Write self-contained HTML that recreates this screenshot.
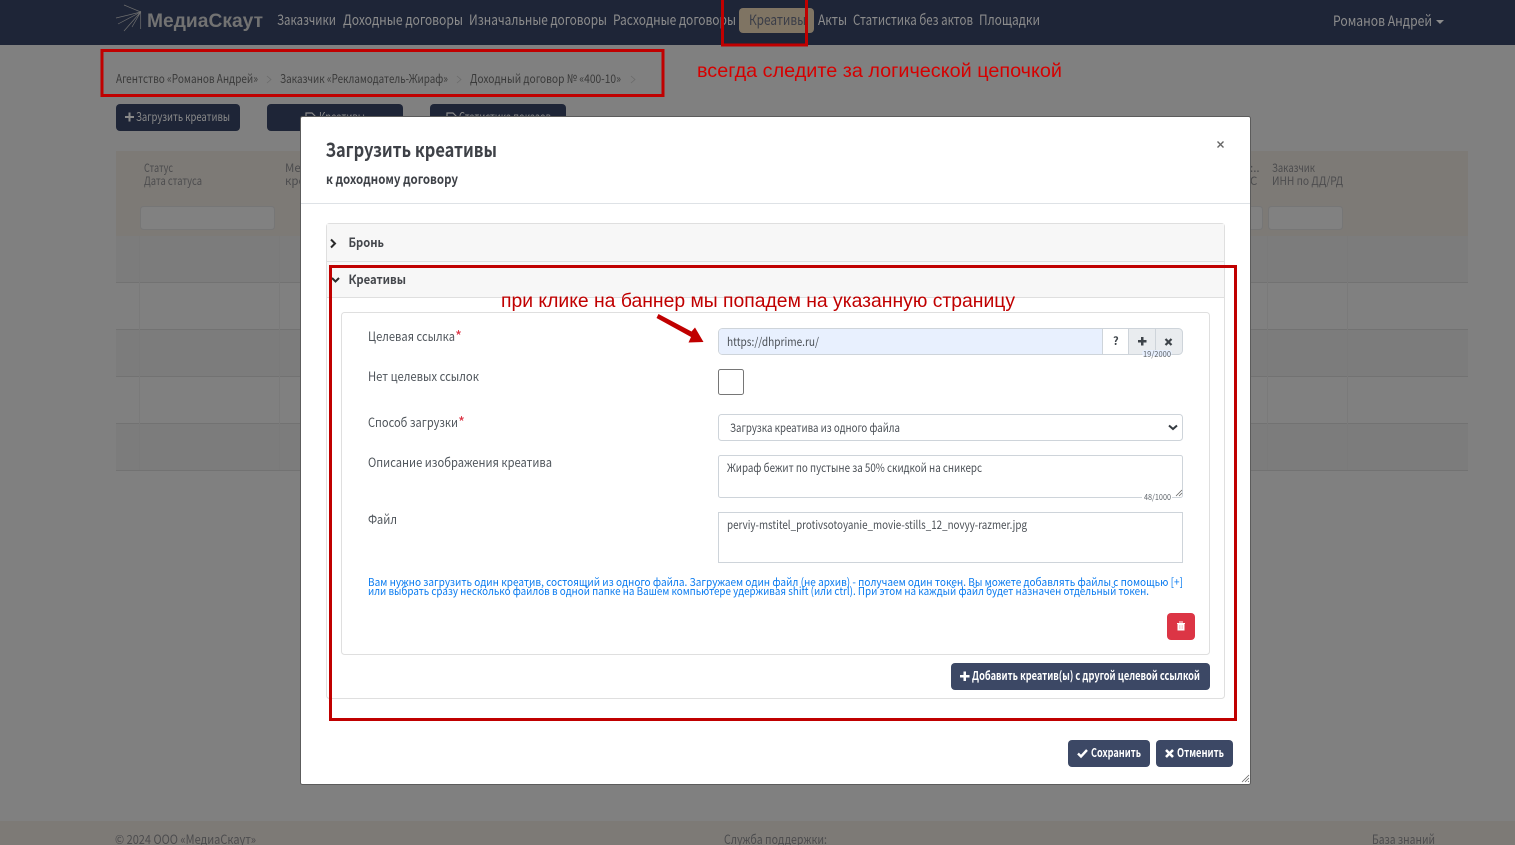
<!DOCTYPE html>
<html lang="ru"><head><meta charset="utf-8"><title>Загрузить креативы</title>
<style>
html,body{margin:0;padding:0;width:1515px;height:845px;overflow:hidden;background:#808080}
svg{display:block}
text{font-family:"Noto Sans CJK SC","Liberation Sans",sans-serif;white-space:pre}
.a{font-family:"Liberation Sans",sans-serif;font-size:19.5px}
.n{font-size:14.5px;fill:#8c8c8c}
.b{font-size:12px;fill:#3a3a3a}
.h{font-size:11.5px;fill:#4c4c4e}
.l{font-size:12.5px;fill:#50565c}
.f{font-size:11.5px;fill:#4a4f55}
.t{font-size:11px;fill:#0a7bf0}
.c{font-size:8px;fill:#60666c}
.w{font-size:12px;fill:#fff;font-weight:700}
.g{font-size:12px;fill:#8a8a8a}
</style></head><body>
<svg width="1515" height="845" viewBox="0 0 1515 845" xmlns="http://www.w3.org/2000/svg">
<rect width="1515" height="845" fill="#808080"/>
<!-- header -->
<rect width="1515" height="45" fill="#1e2537"/>
<g stroke="#6f6f6f" stroke-width=".7" fill="none"><path d="M140.700 11V29M140.700 12L124 5M140.700 12L116 18M140.700 12L118 24M140.700 12L124 31M140.700 12L132 27"/></g>
<text x="147" y="27" textLength="116" lengthAdjust="spacingAndGlyphs" style="font-family:'Liberation Sans',sans-serif;font-size:19px;font-weight:700;fill:#727272">МедиаСкаут</text>
<text class="n" x="277" y="25" textLength="59" lengthAdjust="spacingAndGlyphs">Заказчики</text>
<text class="n" x="343" y="25" textLength="120" lengthAdjust="spacingAndGlyphs">Доходные договоры</text>
<text class="n" x="469" y="25" textLength="138" lengthAdjust="spacingAndGlyphs">Изначальные договоры</text>
<text class="n" x="613" y="25" textLength="123" lengthAdjust="spacingAndGlyphs">Расходные договоры</text>
<rect x="739" y="8" width="75" height="25" rx="4" fill="#7f7463"/>
<text class="n" x="749" y="25" textLength="57" lengthAdjust="spacingAndGlyphs" style="fill:#3a3d48">Креативы</text>
<text class="n" x="818" y="25" textLength="29" lengthAdjust="spacingAndGlyphs">Акты</text>
<text class="n" x="853" y="25" textLength="120" lengthAdjust="spacingAndGlyphs">Статистика без актов</text>
<text class="n" x="979" y="25" textLength="61" lengthAdjust="spacingAndGlyphs">Площадки</text>
<text class="n" x="1333" y="26" textLength="99" lengthAdjust="spacingAndGlyphs">Романов Андрей</text>
<path d="M1436 20h8l-4 4z" fill="#8c8c8c"/>
<!-- breadcrumbs -->
<text class="b" x="116" y="83" textLength="142" lengthAdjust="spacingAndGlyphs">Агентство «Романов Андрей»</text>
<text class="b" x="280" y="83" textLength="168" lengthAdjust="spacingAndGlyphs">Заказчик «Рекламодатель-Жираф»</text>
<text class="b" x="470" y="83" textLength="151" lengthAdjust="spacingAndGlyphs">Доходный договор № «400-10»</text>
<g fill="none" stroke="#6a6a6a" stroke-width=".8"><path d="M267 76l4 3.500-4 3.500M457 76l4 3.500-4 3.500M631 76l4 3.500-4 3.500"/></g>
<!-- page buttons -->
<rect x="116" y="104" width="124" height="27" rx="4" fill="#1e2537"/>
<rect x="267" y="104" width="136" height="27" rx="4" fill="#1e2537"/>
<rect x="430" y="104" width="136" height="27" rx="4" fill="#1e2537"/>
<path d="M125 116h3.500v-3.500h2v3.500h3.500v2h-3.500v3.500h-2v-3.500h-3.500z" fill="#8a8a8a"/>
<text class="g" x="136" y="121" textLength="94" lengthAdjust="spacingAndGlyphs">Загрузить креативы</text>
<text class="g" x="319" y="121" textLength="46" lengthAdjust="spacingAndGlyphs">Креативы</text>
<text class="g" x="459" y="121" textLength="92" lengthAdjust="spacingAndGlyphs">Статистика показов</text>
<path d="M306 113h6l3 3v5h-9zM447 113h6l3 3v5h-9z" fill="none" stroke="#8a8a8a" stroke-width="1.200"/>
<!-- table -->
<rect x="116" y="151" width="1352" height="85" fill="#7d7a76"/>
<rect x="116" y="236" width="1352" height="47" fill="#7c7c7c"/>
<rect x="116" y="330" width="1352" height="47" fill="#7c7c7c"/>
<rect x="116" y="424" width="1352" height="47" fill="#7c7c7c"/>
<g fill="#727272"><rect x="116" y="282" width="1352" height="1"/><rect x="116" y="329" width="1352" height="1"/><rect x="116" y="376" width="1352" height="1"/><rect x="116" y="423" width="1352" height="1"/><rect x="116" y="470" width="1352" height="1"/></g>
<g fill="#7a7a7a"><rect x="139" y="236" width="1" height="234"/><rect x="279" y="236" width="1" height="234"/><rect x="1267" y="236" width="1" height="234"/><rect x="1347" y="236" width="1" height="234"/></g>
<text class="h" x="144" y="172" textLength="29" lengthAdjust="spacingAndGlyphs">Статус</text>
<text class="h" x="144" y="185" textLength="58" lengthAdjust="spacingAndGlyphs">Дата статуса</text>
<text class="h" x="285" y="172">Медиа</text>
<text class="h" x="285" y="185">креатив</text>
<text class="h" x="1250" y="172">:..</text>
<text class="h" x="1250" y="185">С</text>
<text class="h" x="1272" y="172" textLength="43" lengthAdjust="spacingAndGlyphs">Заказчик</text>
<text class="h" x="1272" y="185" textLength="71" lengthAdjust="spacingAndGlyphs">ИНН по ДД/РД</text>
<rect x="140.500" y="206.500" width="134" height="23" rx="3" fill="#818181" stroke="#767676"/>
<rect x="1230.500" y="206.500" width="32" height="23" rx="3" fill="#818181" stroke="#767676"/>
<rect x="1268.500" y="206.500" width="74" height="23" rx="3" fill="#818181" stroke="#767676"/>
<!-- footer -->
<rect y="821" width="1515" height="24" fill="#7d7a76"/>
<text class="h" x="115" y="844" textLength="141" lengthAdjust="spacingAndGlyphs" style="font-size:12.5px">© 2024 ООО «МедиаСкаут»</text>
<text class="h" x="724" y="844" textLength="103" lengthAdjust="spacingAndGlyphs" style="font-size:12.5px">Служба поддержки:</text>
<text class="h" x="1372" y="844" textLength="63" lengthAdjust="spacingAndGlyphs" style="font-size:12.5px">База знаний</text>
<!-- modal -->
<rect x="300.500" y="116.500" width="950" height="668" rx="2" fill="#fff" stroke="#5c5c5c"/>
<text x="325.500" y="157" textLength="171.500" lengthAdjust="spacingAndGlyphs" style="font-size:19.5px;font-weight:700;fill:#3e4147">Загрузить креативы</text>
<text x="326" y="184" textLength="132" lengthAdjust="spacingAndGlyphs" style="font-size:13.5px;font-weight:700;fill:#3e4147">к доходному договору</text>
<path d="M1217.500 141.500l6 6M1223.500 141.500l-6 6" stroke="#666" stroke-width="1.400"/>
<rect x="301" y="203" width="949" height="1" fill="#dee2e6"/>
<!-- accordion -->
<rect x="326.500" y="223.500" width="898" height="475" rx="3" fill="#fff" stroke="#dfdfdf"/>
<rect x="327" y="224" width="897" height="37" fill="#f7f7f7"/>
<rect x="327" y="261" width="897" height="1" fill="#dfdfdf"/>
<rect x="327" y="262" width="897" height="35" fill="#f7f7f7"/>
<rect x="327" y="297" width="897" height="1" fill="#dfdfdf"/>
<path d="M331 239.500l4 4-4 4" fill="none" stroke="#2b2b2b" stroke-width="2"/>
<path d="M332 278l3.500 3.500 3.500-3.500" fill="none" stroke="#2b2b2b" stroke-width="2"/>
<text x="348.500" y="247" textLength="35.500" lengthAdjust="spacingAndGlyphs" style="font-size:12.5px;font-weight:700;fill:#44474c">Бронь</text>
<text x="348.500" y="284" textLength="57.500" lengthAdjust="spacingAndGlyphs" style="font-size:12.5px;font-weight:700;fill:#44474c">Креативы</text>
<!-- card -->
<rect x="341.500" y="312.500" width="868" height="342" rx="3" fill="#fff" stroke="#dfdfdf"/>
<text class="l" x="368" y="341" textLength="87" lengthAdjust="spacingAndGlyphs">Целевая ссылка</text><text x="455" y="342" style="font-size:15px;fill:#dc3545">*</text>
<text class="l" x="368" y="381" textLength="111" lengthAdjust="spacingAndGlyphs">Нет целевых ссылок</text>
<text class="l" x="368" y="427" textLength="90" lengthAdjust="spacingAndGlyphs">Способ загрузки</text><text x="458" y="428" style="font-size:15px;fill:#dc3545">*</text>
<text class="l" x="368" y="467" textLength="184" lengthAdjust="spacingAndGlyphs">Описание изображения креатива</text>
<text class="l" x="368" y="524" textLength="29" lengthAdjust="spacingAndGlyphs">Файл</text>
<!-- url group -->
<rect x="718.500" y="328.500" width="464" height="26" rx="4" fill="#e9ecef" stroke="#ced4da"/>
<path d="M722 329H1102V354H722a3 3 0 0 1-3-3V332a3 3 0 0 1 3-3z" fill="#e8f0fe"/>
<rect x="1102" y="329" width="27" height="25" fill="#fff"/>
<path d="M1102.500 329V354M1128.500 329V354M1155.500 329V354" stroke="#ced4da"/>
<text class="f" x="727" y="346" textLength="92" lengthAdjust="spacingAndGlyphs">https://dhprime.ru/</text>
<text x="1113" y="345" style="font-size:11px;font-weight:700;fill:#3e444a">?</text>
<path d="M1138 340h3v-3h2.500v3h3v2.500h-3v3h-2.500v-3h-3z" fill="#3e444a"/>
<path d="M1165.500 339l6 6M1171.500 339l-6 6" stroke="#3e444a" stroke-width="2.200"/>
<rect x="1142" y="350" width="30" height="6" rx="3" fill="#e8f0fe"/>
<text class="c" x="1143" y="357" textLength="28" lengthAdjust="spacingAndGlyphs">19/2000</text>
<!-- checkbox -->
<rect x="718.500" y="369.500" width="25" height="25" rx="2" fill="#fff" stroke="#767676"/>
<!-- select -->
<rect x="718.500" y="414.500" width="464" height="26" rx="3" fill="#fff" stroke="#ced4da"/>
<text class="f" x="730" y="432" textLength="170" lengthAdjust="spacingAndGlyphs">Загрузка креатива из одного файла</text>
<path d="M1169 425.500l4 3.500 4-3.500" fill="none" stroke="#343a40" stroke-width="2"/>
<!-- textarea -->
<rect x="718.500" y="455.500" width="464" height="42" rx="2" fill="#fff" stroke="#ced4da"/>
<text class="f" x="727" y="472" textLength="255" lengthAdjust="spacingAndGlyphs">Жираф бежит по пустыне за 50% скидкой на сникерс</text>
<rect x="1142" y="494" width="30" height="7" fill="#fff"/>
<text class="c" x="1144" y="500" textLength="27" lengthAdjust="spacingAndGlyphs">48/1000</text>
<path d="M1176 496l6-6M1179 496l3-3" stroke="#666" stroke-width=".8"/>
<!-- file -->
<rect x="718.500" y="512.500" width="464" height="50" fill="#fff" stroke="#ced4da"/>
<text class="f" x="727" y="529" textLength="300" lengthAdjust="spacingAndGlyphs">perviy-mstitel_protivsotoyanie_movie-stills_12_novyy-razmer.jpg</text>
<!-- help -->
<text class="t" x="368" y="586" textLength="815" lengthAdjust="spacingAndGlyphs">Вам нужно загрузить один креатив, состоящий из одного файла. Загружаем один файл (не архив) - получаем один токен. Вы можете добавлять файлы с помощью [+]</text>
<text class="t" x="368" y="595" textLength="781" lengthAdjust="spacingAndGlyphs">или выбрать сразу несколько файлов в одной папке на Вашем компьютере удерживая shift (или ctrl). При этом на каждый файл будет назначен отдельный токен.</text>
<!-- delete -->
<rect x="1167" y="613" width="28" height="27" rx="4" fill="#dc3545"/>
<path d="M1177 623h8v1h-.5v6.500h-7V624h-.5zM1179 621.500h4v1h-4z" fill="#fff"/>
<path d="M1179.500 625v4M1181 625v4M1182.500 625v4" stroke="#f3b7bd" stroke-width=".6"/>
<!-- add button -->
<rect x="951" y="663" width="259" height="27" rx="4" fill="#3c4865"/>
<path d="M960 675h3.500v-3.500h2.500v3.500h3.500v2.500h-3.500v3.500h-2.500v-3.500H960z" fill="#fff"/>
<text class="w" x="972" y="680" textLength="228" lengthAdjust="spacingAndGlyphs">Добавить креатив(ы) с другой целевой ссылкой</text>
<!-- footer buttons -->
<rect x="1068" y="740" width="82" height="27" rx="4" fill="#3c4865"/>
<path d="M1078 753.500l3 3 6-6.500" fill="none" stroke="#fff" stroke-width="2.400"/>
<text class="w" x="1091" y="757" textLength="50" lengthAdjust="spacingAndGlyphs">Сохранить</text>
<rect x="1156" y="740" width="77" height="27" rx="4" fill="#3c4865"/>
<path d="M1166 750l7 7M1173 750l-7 7" stroke="#fff" stroke-width="2.600"/>
<text class="w" x="1177" y="757" textLength="47" lengthAdjust="spacingAndGlyphs">Отменить</text>
<path d="M1242 782l7-7M1245 782l4-4M1248 782l1-1" stroke="#666" stroke-width=".8"/>
<!-- annotations -->
<rect x="102" y="50.500" width="561" height="45" fill="none" stroke="#c00000" stroke-width="3"/>
<rect x="722.500" y="-2" width="84" height="47" fill="none" stroke="#c00000" stroke-width="3"/>
<rect x="330.500" y="266.500" width="905" height="453" fill="none" stroke="#c00000" stroke-width="3"/>
<text class="a" x="697" y="77" textLength="365" lengthAdjust="spacingAndGlyphs" fill="#d60000">всегда следите за логической цепочкой</text>
<text class="a" x="501" y="307" textLength="514" lengthAdjust="spacingAndGlyphs" fill="#c00000">при клике на баннер мы попадем на указанную страницу</text>
<path d="M656.500 318L658.500 314L691.500 331.500L695 327.500L703.500 342L688.500 342.500L691 337Z" fill="#c00000"/>
</svg>
</body></html>
